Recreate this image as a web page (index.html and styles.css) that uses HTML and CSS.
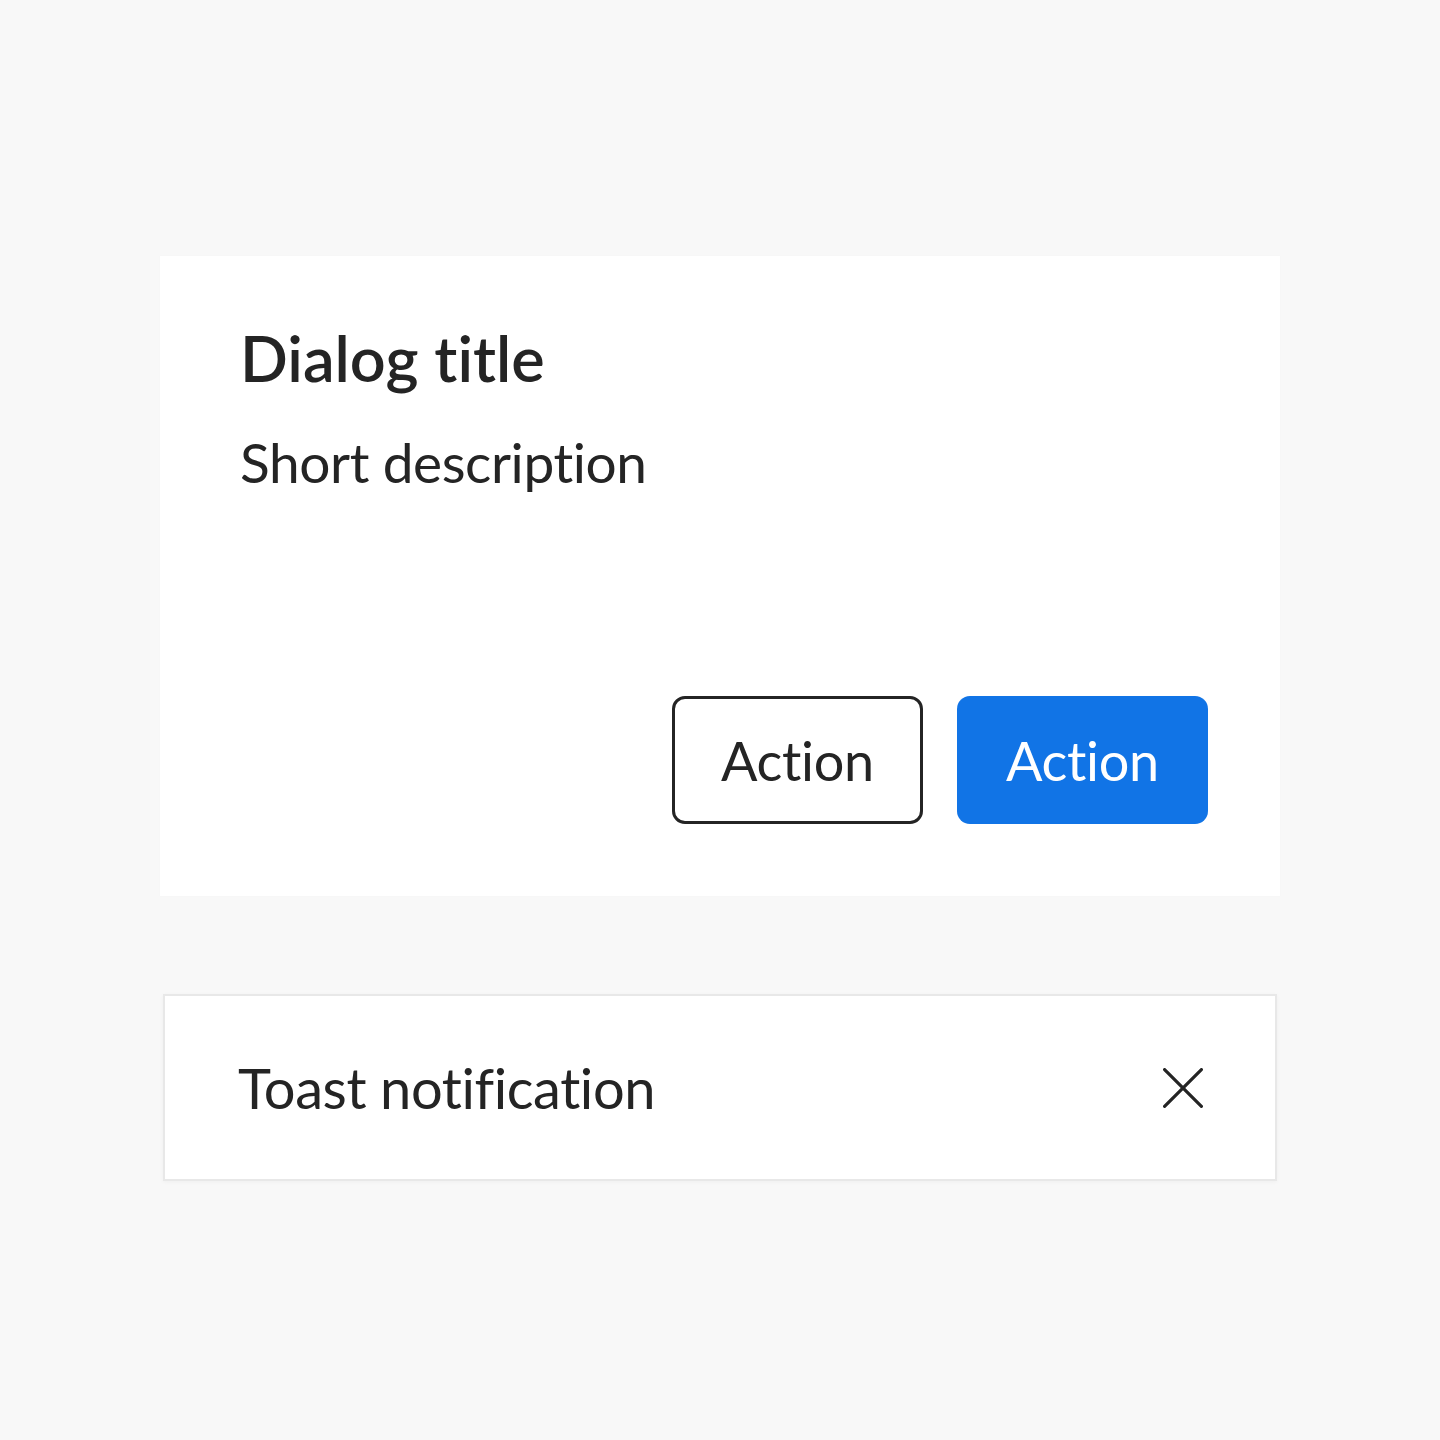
FILE: index.html
```html
<!DOCTYPE html>
<html>
<head>
<meta charset="utf-8">
<link rel="stylesheet" href="styles.css">
</head>
<body>
<main class="stage">
  <section class="dialog">
    <h1 class="dialog-title">Dialog title</h1>
    <p class="dialog-desc">Short description</p>
    <div class="dialog-actions">
      <button class="btn btn-secondary">Action</button>
      <button class="btn btn-primary">Action</button>
    </div>
  </section>
  <section class="toast">
    <span class="toast-text">Toast notification</span>
    <svg class="toast-close" width="40" height="40" viewBox="0 0 40 40" aria-hidden="true">
      <path d="M1.6 1.6 L38.4 38.4 M38.4 1.6 L1.6 38.4" stroke="#242424" stroke-width="3.2" stroke-linecap="round" fill="none"/>
    </svg>
  </section>
</main>
</body>
</html>
```

FILE: styles.css
```css
* { box-sizing: border-box; }
html, body {
  margin: 0;
  padding: 0;
  background: #f8f8f8;
}
body {
  width: 1440px;
  height: 1440px;
  font-family: Lato, "Noto Sans", sans-serif;
  font-variant-ligatures: none;
  color: #242424;
}
.stage {
  padding: 256px 160px 0 160px;
  display: flex;
  flex-direction: column;
}
.dialog {
  background: #ffffff;
  height: 640px;
  padding: 63px 72px 72px 80px;
  display: flex;
  flex-direction: column;
  box-shadow: 0 0 2px rgba(0,0,0,0.02);
}
.dialog-title {
  margin: 0;
  font-size: 63px;
  font-weight: 600;
  line-height: 77px;
}
.dialog-desc {
  margin: 33px 0 0 0;
  font-size: 55px;
  font-weight: 400;
  letter-spacing: -0.4px;
  line-height: 66px;
}
.dialog-actions {
  margin-top: auto;
  display: flex;
  justify-content: flex-end;
  gap: 34px;
}
.btn {
  width: 251px;
  height: 128px;
  border-radius: 13px;
  font-family: Lato, "Noto Sans", sans-serif;
  font-variant-ligatures: none;
  font-size: 54px;
  letter-spacing: -0.3px;
  font-weight: 400;
  padding: 0;
  display: flex;
  align-items: center;
  justify-content: center;
}
.btn-secondary {
  background: #ffffff;
  border: 3px solid #242424;
  color: #242424;
}
.btn-primary {
  background: #1174e6;
  border: none;
  color: #ffffff;
}
.toast {
  margin: 98px 3px 0 3px;
  height: 187px;
  background: #ffffff;
  border: 2px solid #e8e8e8;
  box-shadow: 0 1px 4px rgba(0,0,0,0.04);
  display: flex;
  align-items: center;
  justify-content: space-between;
  padding: 0 72px 0 73px;
}
.toast-text {
  font-size: 56px;
  letter-spacing: -0.4px;
  line-height: 68px;
}
.toast-close {
  display: block;
}
```
